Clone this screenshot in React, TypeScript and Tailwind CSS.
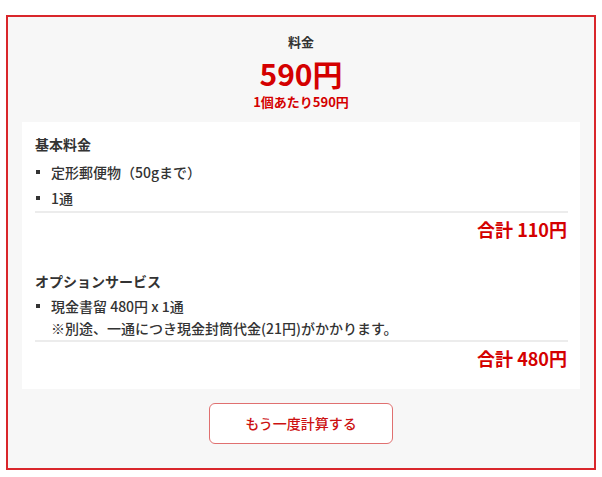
const RED = 'text-[#d40000]';

function Bullet({ children }: { children: React.ReactNode }) {
  return (
    <li className="flex items-center h-[26px]">
      <span className="w-[4px] h-[4px] bg-[#333] mr-[11px] ml-[1px] shrink-0" />
      <span>{children}</span>
    </li>
  );
}

function Total({ amount }: { amount: string }) {
  return (
    <div className={`border-t-2 border-[#ececec] flex justify-end items-center h-[34px] pr-[1px] text-[18px] font-semibold ${RED}`}>
      合計 {amount}
    </div>
  );
}

export default function App() {
  return (
    <div
      className="bg-white w-[602px] h-[477px] pt-[15px] pl-[6px]"
      style={{ fontFamily: '"Noto Sans CJK JP", "Noto Sans", sans-serif' }}
    >
      <div className="w-[590px] h-[455px] border-2 border-[#d9262b] bg-[#f7f7f7] px-[14px] text-[#333]">
        {/* Header */}
        <div className="flex flex-col items-center pt-[15px]">
          <div className="text-[13px] font-bold leading-[20px]">料金</div>
          <div className={`text-[30px] font-bold leading-[40px] mt-[1px] ${RED}`}>590円</div>
          <div className={`text-[13px] font-bold leading-[18px] ${RED}`}>1個あたり590円</div>
        </div>

        {/* Detail panel */}
        <div className="bg-white mt-[11px] h-[267px] pl-[13px] pr-[12px] pt-[12px] text-[14px] font-medium">
          <div className="font-bold leading-[20px] h-[20px]">基本料金</div>
          <ul className="mt-[5px]">
            <Bullet>定形郵便物（50gまで）</Bullet>
            <Bullet>1通</Bullet>
          </ul>
          <Total amount="110円" />

          <div className="font-bold leading-[20px] h-[20px] mt-[26px]">オプションサービス</div>
          <ul className="mt-[4px]">
            <li className="flex items-start">
              <span className="w-[4px] h-[4px] bg-[#333] mr-[11px] ml-[1px] mt-[9px] shrink-0" />
              <div className="leading-[22px]">
                <div>現金書留 480円 x 1通</div>
                <div>※別途、一通につき現金封筒代金(21円)がかかります。</div>
              </div>
            </li>
          </ul>
          <div className="mt-[1px]">
            <Total amount="480円" />
          </div>
        </div>

        {/* Button */}
        <div className="flex justify-center mt-[14px]">
          <button className="w-[184px] h-[41px] bg-white border border-[#e07070] rounded-[6px] text-[14px] font-medium text-[#cc1111]">
            もう一度計算する
          </button>
        </div>
      </div>
    </div>
  );
}
